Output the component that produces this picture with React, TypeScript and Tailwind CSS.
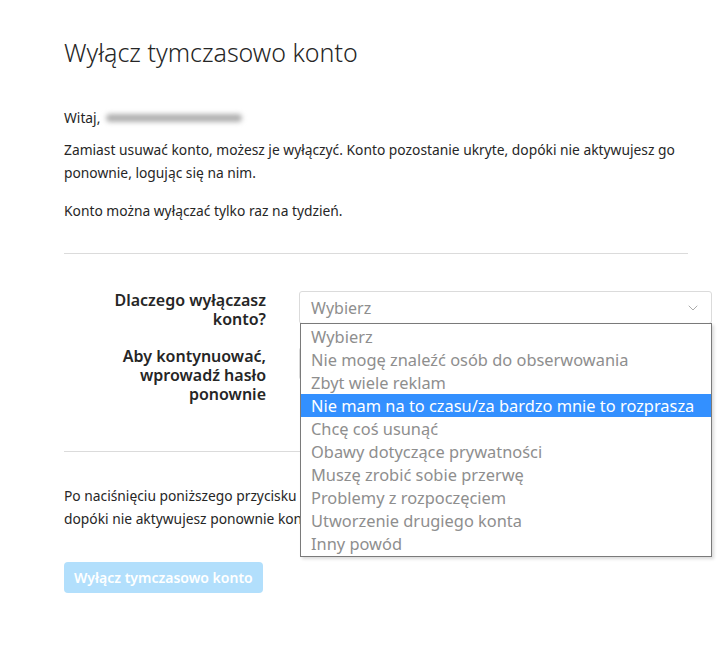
import { ChevronDown } from "lucide-react";

const reasons = [
    "Wybierz",
    "Nie mogę znaleźć osób do obserwowania",
    "Zbyt wiele reklam",
    "Nie mam na to czasu/za bardzo mnie to rozprasza",
    "Chcę coś usunąć",
    "Obawy dotyczące prywatności",
    "Muszę zrobić sobie przerwę",
    "Problemy z rozpoczęciem",
    "Utworzenie drugiego konta",
    "Inny powód",
];

export default function App() {
    const selected = 3;

    return (
        <div className="min-h-[660px] w-[720px] bg-white text-[#262626] font-['Noto_Sans',sans-serif]">
            <div className="pl-16 pt-[34px] w-[688px]">
                <h1 className="text-[25px] font-light leading-[36px]">Wyłącz tymczasowo konto</h1>

                <div className="mt-[36px] text-[13.8px] leading-[23px]">
                    <div className="flex items-center">
                        <span>Witaj,</span>
                        <span className="ml-[6px] h-[8px] w-[136px] rounded-full bg-[#b0b0b0] blur-[2.5px]" />
                    </div>
                    <p className="mt-[9px]">
                        Zamiast usuwać konto, możesz je wyłączyć. Konto pozostanie ukryte, dopóki nie aktywujesz go ponownie, logując się na nim.
                    </p>
                    <p className="mt-[15px]">Konto można wyłączać tylko raz na tydzień.</p>
                </div>

                <hr className="mt-[31px] border-[#dbdbdb]" />

                <div className="mt-[37px] flex flex-col gap-[18px]">
                    <div className="flex gap-[33px]">
                        <label className="w-[202px] shrink-0 text-right text-[16px] font-semibold leading-[19px]">
                            Dlaczego wyłączasz konto?
                        </label>
                        <div className="relative w-[413px] shrink-0">
                            <div className="flex h-[33px] items-center justify-between rounded-[3px] border border-[#dbdbdb] bg-white pl-[11px] pr-[10px] text-[16px] text-[#8e8e8e]">
                                <span>Wybierz</span>
                                <ChevronDown className="h-[16px] w-[16px] text-[#9a9a9a]" strokeWidth={1.25} />
                            </div>
                            <ul className="absolute left-[1px] top-[32px] z-10 w-[412px] border border-[#7a7a7a] bg-white py-[1px] text-[16.4px] leading-[23px] text-[#8e8e8e] shadow-[2px_2px_3px_rgba(0,0,0,0.15)]">
                                {reasons.map((r, i) => (
                                    <li
                                        key={r}
                                        className={i === selected ? "bg-[#3390ff] pl-[10px] text-white" : "pl-[10px]"}
                                    >
                                        {r}
                                    </li>
                                ))}
                            </ul>
                        </div>
                    </div>
                    <div className="flex gap-[33px]">
                        <label className="w-[202px] shrink-0 text-right text-[16px] font-semibold leading-[19px]">
                            Aby kontynuować, wprowadź hasło ponownie
                        </label>
                        <div className="h-[33px] w-[413px] shrink-0 rounded-[3px] border border-[#dbdbdb]" />
                    </div>
                </div>

                <hr className="mt-[47px] border-[#dbdbdb]" />

                <p className="mt-[32px] text-[13.8px] leading-[23px]">
                    Po naciśnięciu poniższego przycisku Twoje zdjęcia, komentarze i polubienia zostaną ukryte, dopóki nie aktywujesz ponownie konta, logując się na nie.
                </p>

                <button className="mt-[32px] h-[31px] rounded-[4px] bg-[#b2dffc] px-[10px] text-[14px] font-semibold text-white">
                    Wyłącz tymczasowo konto
                </button>
            </div>
        </div>
    );
}
